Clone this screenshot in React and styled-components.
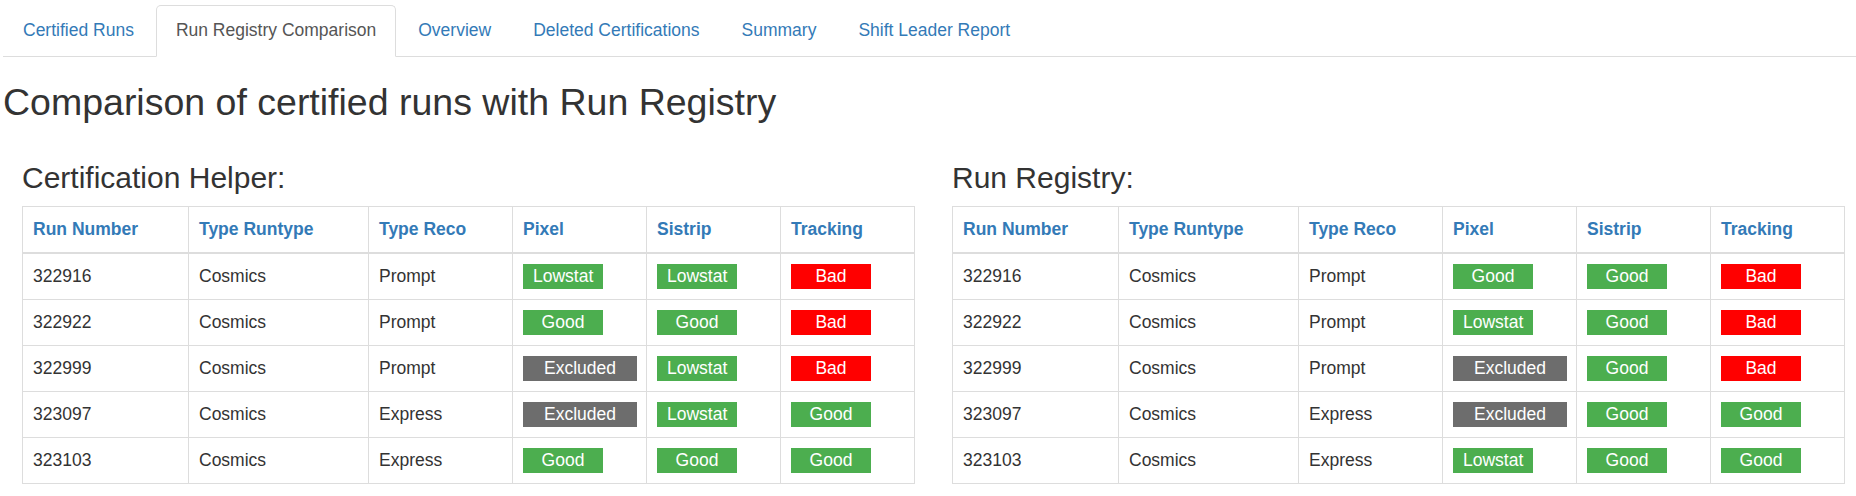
import React from "react";
import styled, { createGlobalStyle } from "styled-components";

const GlobalStyle = createGlobalStyle`
  html, body {
    margin: 0;
    padding: 0;
    background: #fff;
  }
  body {
    font-family: "Liberation Sans", Arial, Helvetica, sans-serif;
    font-size: 17.5px;
    line-height: 25px;
    color: #333;
    overflow-x: hidden;
  }
`;

const Page = styled.div`
  padding-left: 3px;
`;

const TabBar = styled.ul`
  display: flex;
  list-style: none;
  margin: 0;
  padding: 5px 0 0 0;
  border-bottom: 1px solid #ddd;
`;

const Tab = styled.li`
  margin: 0 2px -1px 0;
  padding: 11.5px 19px 13.5px;
  line-height: 25px;
  border: 1px solid ${p => (p.$active ? "#ddd" : "transparent")};
  border-bottom-color: ${p => (p.$active ? "#fff" : "transparent")};
  border-radius: 5px 5px 0 0;
  background: ${p => (p.$active ? "#fff" : "transparent")};
  color: ${p => (p.$active ? "#555" : "#337ab7")};
  cursor: pointer;
  white-space: nowrap;
`;

const Title = styled.h2`
  margin: 25px 0 12.5px;
  font-size: 37.5px;
  line-height: 1.1;
  font-weight: 500;
`;

const Columns = styled.div`
  display: grid;
  grid-template-columns: 930px 1fr;
`;

const Column = styled.section`
  padding: 0 19px;
`;

const SectionTitle = styled.h3`
  margin: 25px 0 12.5px;
  font-size: 30px;
  line-height: 1.1;
  font-weight: 500;
`;

const Table = styled.table`
  width: 892px;
  table-layout: fixed;
  border-collapse: collapse;
  border: 1px solid #ddd;
`;

const Th = styled.th`
  padding: 10px;
  text-align: left;
  vertical-align: bottom;
  font-weight: bold;
  color: #337ab7;
  border: 1px solid #ddd;
  border-bottom-width: 2px;
`;

const Td = styled.td`
  padding: 10px;
  text-align: left;
  vertical-align: top;
  border: 1px solid #ddd;
  white-space: nowrap;
`;

const statusColors = {
  Good: "#4cae4f",
  Lowstat: "#4cae4f",
  Bad: "#ff0000",
  Excluded: "#6d6d6d",
};

const Status = styled.span`
  display: inline-block;
  min-width: 80px;
  box-sizing: border-box;
  padding: 0 ${p => (p.$wide ? 21 : 10)}px;
  line-height: 25px;
  text-align: center;
  color: #fff;
  background: ${p => statusColors[p.$kind]};
`;

const tabs = [
  "Certified Runs",
  "Run Registry Comparison",
  "Overview",
  "Deleted Certifications",
  "Summary",
  "Shift Leader Report",
];

const columns = ["Run Number", "Type Runtype", "Type Reco", "Pixel", "Sistrip", "Tracking"];
const widths = [166, 180, 144, 134, 134, 134];

const helperRows = [
  ["322916", "Cosmics", "Prompt", "Lowstat", "Lowstat", "Bad"],
  ["322922", "Cosmics", "Prompt", "Good", "Good", "Bad"],
  ["322999", "Cosmics", "Prompt", "Excluded", "Lowstat", "Bad"],
  ["323097", "Cosmics", "Express", "Excluded", "Lowstat", "Good"],
  ["323103", "Cosmics", "Express", "Good", "Good", "Good"],
];

const registryRows = [
  ["322916", "Cosmics", "Prompt", "Good", "Good", "Bad"],
  ["322922", "Cosmics", "Prompt", "Lowstat", "Good", "Bad"],
  ["322999", "Cosmics", "Prompt", "Excluded", "Good", "Bad"],
  ["323097", "Cosmics", "Express", "Excluded", "Good", "Good"],
  ["323103", "Cosmics", "Express", "Lowstat", "Good", "Good"],
];

function RunTable({ rows }) {
  return (
    <Table>
      <colgroup>
        {widths.map((w, i) => (
          <col key={i} style={{ width: w }} />
        ))}
      </colgroup>
      <thead>
        <tr>
          {columns.map(c => (
            <Th key={c}>{c}</Th>
          ))}
        </tr>
      </thead>
      <tbody>
        {rows.map(row => (
          <tr key={row[0]}>
            <Td>{row[0]}</Td>
            <Td>{row[1]}</Td>
            <Td>{row[2]}</Td>
            {row.slice(3).map((s, i) => (
              <Td key={i}>
                <Status $kind={s} $wide={s === "Excluded"}>{s}</Status>
              </Td>
            ))}
          </tr>
        ))}
      </tbody>
    </Table>
  );
}

const App = () => {
  return (
    <Page>
      <GlobalStyle />
      <TabBar>
        {tabs.map(t => (
          <Tab key={t} $active={t === "Run Registry Comparison"}>{t}</Tab>
        ))}
      </TabBar>
      <Title>Comparison of certified runs with Run Registry</Title>
      <Columns>
        <Column>
          <SectionTitle>Certification Helper:</SectionTitle>
          <RunTable rows={helperRows} />
        </Column>
        <Column>
          <SectionTitle>Run Registry:</SectionTitle>
          <RunTable rows={registryRows} />
        </Column>
      </Columns>
    </Page>
  );
};

export default App;
